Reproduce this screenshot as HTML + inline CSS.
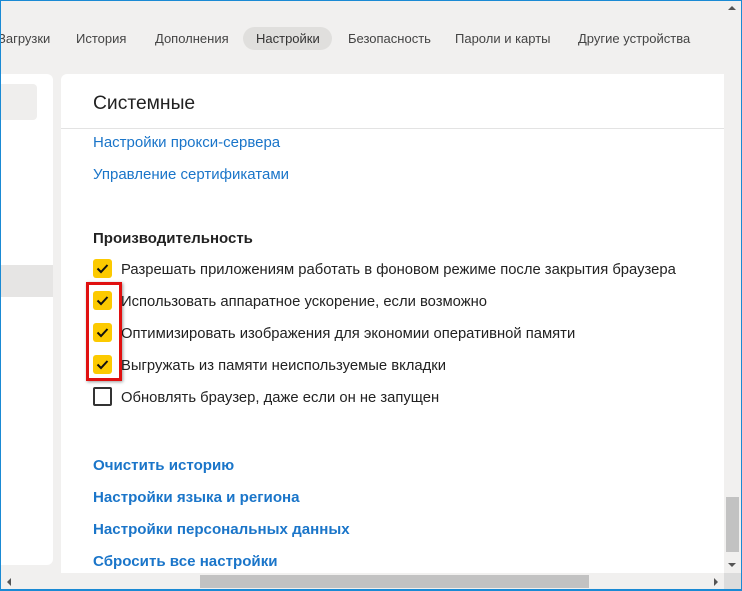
<!DOCTYPE html>
<html><head><meta charset="utf-8"><style>
*{margin:0;padding:0;box-sizing:border-box}
body{width:742px;height:591px;overflow:hidden;background:#f1f0ef;font-family:"Liberation Sans","DejaVu Sans",sans-serif;position:relative;color:#222}
.b{position:absolute;background:#1a8ad4}
.t{position:absolute;top:31px;font-size:13px;color:#444;white-space:nowrap}
.pill{position:absolute;left:243px;top:27px;width:89px;height:23px;border-radius:12px;background:#e0dfdd}
.lp{position:absolute;left:-10px;top:74px;width:63px;height:491px;background:#fff;border-radius:6px}
.mp{position:absolute;left:61px;top:74px;width:663px;height:499px;background:#fff;border-radius:6px 0 0 0}
.a{position:absolute;font-size:15px;color:#1a75c9;white-space:nowrap}
.ab{font-weight:bold;font-size:15.1px}
.cb{position:absolute;left:93px;width:19px;height:19px;border-radius:3px;background:#fcca00}
.cb svg{position:absolute;left:3px;top:4px}
.lb{position:absolute;left:121px;font-size:14.8px;color:#222;white-space:nowrap}
</style></head><body>
<div class="pill"></div>
<div class="t" style="left:-2px">Загрузки</div>
<div class="t" style="left:76px">История</div>
<div class="t" style="left:155px">Дополнения</div>
<div class="t" style="left:256px;color:#333">Настройки</div>
<div class="t" style="left:348px">Безопасность</div>
<div class="t" style="left:455px">Пароли и карты</div>
<div class="t" style="left:578px">Другие устройства</div>
<div class="lp"></div>
<div style="position:absolute;left:0;top:84px;width:37px;height:36px;background:#efeeed;border-radius:0 4px 4px 0"></div>
<div style="position:absolute;left:0;top:265px;width:53px;height:32px;background:#e6e5e4"></div>
<div class="mp"></div>
<div style="position:absolute;left:93px;top:93px;font-size:19.3px;color:#222">Системные</div>
<div style="position:absolute;left:61px;top:128px;width:663px;height:1px;background:#e3e3e3"></div>
<div class="a" style="left:93px;top:134px">Настройки прокси-сервера</div>
<div class="a" style="left:93px;top:166px">Управление сертификатами</div>
<div style="position:absolute;left:93px;top:230px;font-size:15px;font-weight:bold;color:#222">Производительность</div>
<div class="cb" style="top:259px"><svg width="13" height="11"><path d="M1.5 5.5 L5 9 L11.5 2" stroke="#111" stroke-width="2" fill="none"/></svg></div>
<div class="lb" style="top:262px">Разрешать приложениям работать в фоновом режиме после закрытия браузера</div>
<div class="cb" style="top:291px"><svg width="13" height="11"><path d="M1.5 5.5 L5 9 L11.5 2" stroke="#111" stroke-width="2" fill="none"/></svg></div>
<div class="lb" style="top:294px">Использовать аппаратное ускорение, если возможно</div>
<div class="cb" style="top:323px"><svg width="13" height="11"><path d="M1.5 5.5 L5 9 L11.5 2" stroke="#111" stroke-width="2" fill="none"/></svg></div>
<div class="lb" style="top:326px">Оптимизировать изображения для экономии оперативной памяти</div>
<div class="cb" style="top:355px"><svg width="13" height="11"><path d="M1.5 5.5 L5 9 L11.5 2" stroke="#111" stroke-width="2" fill="none"/></svg></div>
<div class="lb" style="top:358px">Выгружать из памяти неиспользуемые вкладки</div>
<div style="position:absolute;left:93px;top:387px;width:19px;height:19px;border:2px solid #333;border-radius:2px"></div>
<div class="lb" style="top:390px">Обновлять браузер, даже если он не запущен</div>
<div style="position:absolute;left:86px;top:282px;width:36px;height:99px;border:3px solid #e01010;box-shadow:1px 1px 3px rgba(0,0,0,.4)"></div>
<div class="a ab" style="left:93px;top:457px">Очистить историю</div>
<div class="a ab" style="left:93px;top:489px">Настройки языка и региона</div>
<div class="a ab" style="left:93px;top:521px">Настройки персональных данных</div>
<div class="a ab" style="left:93px;top:553px">Сбросить все настройки</div>
<div style="position:absolute;left:724px;top:0;width:17px;height:573px;background:#f1f0ef"></div>
<div style="position:absolute;left:726px;top:497px;width:13px;height:55px;background:#c2c2c2"></div>
<div style="position:absolute;left:728px;top:6px;width:0;height:0;border-left:4px solid transparent;border-right:4px solid transparent;border-bottom:4px solid #555"></div>
<div style="position:absolute;left:728px;top:563px;width:0;height:0;border-left:4px solid transparent;border-right:4px solid transparent;border-top:4px solid #555"></div>
<div style="position:absolute;left:0;top:573px;width:742px;height:17px;background:#f1f0ef"></div>
<div style="position:absolute;left:200px;top:575px;width:389px;height:13px;background:#c2c2c2"></div>
<div style="position:absolute;left:724px;top:573px;width:17px;height:17px;background:#dcdcdc"></div>
<div style="position:absolute;left:7px;top:578px;width:0;height:0;border-top:4px solid transparent;border-bottom:4px solid transparent;border-right:4px solid #555"></div>
<div style="position:absolute;left:714px;top:578px;width:0;height:0;border-top:4px solid transparent;border-bottom:4px solid transparent;border-left:4px solid #555"></div>
<div class="b" style="left:0;top:0;width:742px;height:1px"></div>
<div class="b" style="left:0;top:0;width:1px;height:591px"></div>
<div class="b" style="left:741px;top:0;width:1px;height:591px"></div>
<div class="b" style="left:0;top:589px;width:742px;height:2px"></div>
</body></html>
